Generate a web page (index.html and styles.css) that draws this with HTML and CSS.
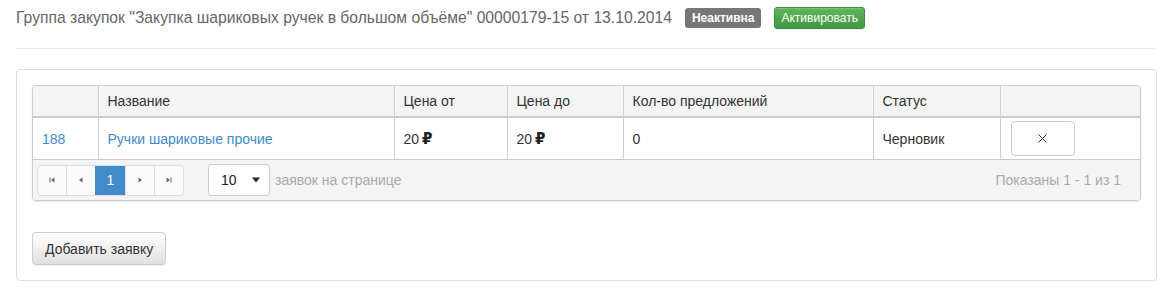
FILE: index.html
```html
<!DOCTYPE html>
<html lang="ru">
<head>
    <meta charset="UTF-8">
    <title>Группа закупок</title>
    <link rel="stylesheet" href="styles.css">
</head>
<body>
    <div class="page">
        <div class="title-row">
            <span class="title">Группа закупок "Закупка шариковых ручек в большом объёме" 00000179-15 от 13.10.2014</span>
            <span class="label">Неактивна</span>
            <button class="btn-activate">Активировать</button>
        </div>
        <hr class="divider">

        <div class="panel">
            <div class="grid">
                <table>
                    <colgroup>
                        <col style="width: 65px">
                        <col style="width: 296px">
                        <col style="width: 113px">
                        <col style="width: 116px">
                        <col style="width: 250px">
                        <col style="width: 127px">
                        <col>
                    </colgroup>
                    <thead>
                        <tr>
                            <th></th>
                            <th>Название</th>
                            <th>Цена от</th>
                            <th>Цена до</th>
                            <th>Кол-во предложений</th>
                            <th>Статус</th>
                            <th></th>
                        </tr>
                    </thead>
                    <tbody>
                        <tr>
                            <td><a href="#">188</a></td>
                            <td><a href="#">Ручки шариковые прочие</a></td>
                            <td>20 <span class="rub">₽</span></td>
                            <td>20 <span class="rub">₽</span></td>
                            <td>0</td>
                            <td>Черновик</td>
                            <td>
                                <button class="btn-delete" aria-label="Удалить">
                                    <svg width="9" height="9" viewBox="0 0 9 9"><path d="M0.5 0.5 L8.5 8.5 M8.5 0.5 L0.5 8.5" stroke="#333" stroke-width="1" fill="none"/></svg>
                                </button>
                            </td>
                        </tr>
                    </tbody>
                </table>

                <div class="grid-footer">
                    <div class="pager">
                        <span class="pager-btn">
                            <svg width="8" height="8" viewBox="0 0 8 8"><rect x="1.5" y="1.5" width="1" height="5" fill="#666"/><path d="M6.5 1.5 L3 4 L6.5 6.5 Z" fill="#666"/></svg>
                        </span>
                        <span class="pager-btn">
                            <svg width="8" height="8" viewBox="0 0 8 8"><path d="M5.5 1.5 L2 4 L5.5 6.5 Z" fill="#666"/></svg>
                        </span>
                        <span class="pager-btn active">1</span>
                        <span class="pager-btn">
                            <svg width="8" height="8" viewBox="0 0 8 8"><path d="M2.5 1.5 L6 4 L2.5 6.5 Z" fill="#666"/></svg>
                        </span>
                        <span class="pager-btn">
                            <svg width="8" height="8" viewBox="0 0 8 8"><path d="M1.5 1.5 L5 4 L1.5 6.5 Z" fill="#666"/><rect x="5.5" y="1.5" width="1" height="5" fill="#666"/></svg>
                        </span>
                    </div>
                    <div class="page-size">
                        <span>10</span>
                        <svg width="8" height="6" viewBox="0 0 8 6"><path d="M0 0.5 L8 0.5 L4 5.5 Z" fill="#222"/></svg>
                    </div>
                    <span class="muted">заявок на странице</span>
                    <span class="muted info">Показаны 1 - 1 из 1</span>
                </div>
            </div>

            <button class="btn-add">Добавить заявку</button>
        </div>
    </div>
</body>
</html>
```

FILE: styles.css
```css
body {
    margin: 0;
    font-family: "Liberation Sans", Arial, sans-serif;
    font-size: 14px;
    color: #333;
    background: #fff;
}

.page {
    width: 1141px;
    padding: 7px 0 0 16px;
}

/* Header */
.title-row {
    display: flex;
    align-items: center;
    height: 22px;
}

.title {
    font-size: 15.7px;
    color: #666;
    margin-right: 13px;
}

.label {
    background: #777;
    color: #fff;
    font-size: 12px;
    font-weight: bold;
    line-height: 20px;
    height: 20px;
    padding: 0 7px;
    border-radius: 3px;
    margin-right: 13px;
}

.btn-activate {
    font-family: inherit;
    font-size: 12px;
    color: #fff;
    height: 22px;
    padding: 0 6px;
    border: 1px solid #3e8f3e;
    border-radius: 3px;
    background: linear-gradient(to bottom, #5cb85c 0%, #419641 100%);
    box-shadow: inset 0 1px 0 rgba(255,255,255,0.15), 0 1px 1px rgba(0,0,0,0.075);
}

.divider {
    border: 0;
    border-top: 1px solid #eee;
    margin: 19px 0 20px;
}

/* Panel */
.panel {
    border: 1px solid #ddd;
    border-radius: 4px;
    padding: 15px;
    box-shadow: 0 1px 1px rgba(0,0,0,0.05);
}

.grid {
    border: 1px solid #ccc;
    border-radius: 4px;
    overflow: hidden;
    box-shadow: 0 1px 2px rgba(0,0,0,0.1);
}

table {
    width: 100%;
    border-collapse: collapse;
    table-layout: fixed;
}

th {
    background: #f4f4f4;
    font-weight: normal;
    text-align: left;
    height: 30px;
    padding: 0 9px;
    border-left: 1px solid #d0d0d0;
    border-bottom: 2px solid #ccc;
}

td {
    height: 41px;
    padding: 0 9px;
    border-left: 1px solid #d0d0d0;
    border-bottom: 1px solid #ccc;
}

th:first-child,
td:first-child {
    border-left: 0;
}

a {
    color: #428bca;
    text-decoration: none;
}

.rub {
    font-family: "DejaVu Sans", sans-serif;
    font-weight: bold;
    font-size: 15px;
    color: #222;
    margin-left: -1px;
}

.btn-delete {
    display: flex;
    align-items: center;
    justify-content: center;
    width: 64px;
    height: 35px;
    margin-left: 1px;
    background: #fff;
    border: 1px solid #ccc;
    border-radius: 4px;
}

/* Footer */
.grid-footer {
    display: flex;
    align-items: center;
    height: 40px;
    padding: 0 19px 0 4px;
    background: #f4f4f4;
}

.pager {
    display: flex;
    border: 1px solid #ddd;
    border-radius: 4px;
    overflow: hidden;
    background: #fafafa;
}

.pager-btn {
    width: 28px;
    height: 29px;
    display: flex;
    align-items: center;
    justify-content: center;
    border-left: 1px solid #ddd;
    color: #428bca;
}

.pager-btn:first-child {
    border-left: 0;
}

.pager-btn.active {
    background: #428bca;
    color: #fff;
    border-left-color: #428bca;
    width: 29px;
}

.page-size {
    display: flex;
    align-items: center;
    justify-content: space-between;
    width: 62px;
    height: 32px;
    padding: 0 9px 0 12px;
    box-sizing: border-box;
    margin-left: 24px;
    background: #fff;
    border: 1px solid #ccc;
    border-radius: 4px;
    font-size: 14px;
    color: #222;
}

.muted {
    color: #aaa;
}

.page-size + .muted {
    margin-left: 5px;
}

.info {
    margin-left: auto;
}

.btn-add {
    margin-top: 31px;
    font-family: inherit;
    font-size: 14px;
    color: #333;
    height: 33px;
    padding: 0 12px;
    border: 1px solid #ccc;
    border-radius: 4px;
    background: linear-gradient(to bottom, #fff 0%, #e0e0e0 100%);
    box-shadow: 0 1px 1px rgba(0,0,0,0.075);
}
```
